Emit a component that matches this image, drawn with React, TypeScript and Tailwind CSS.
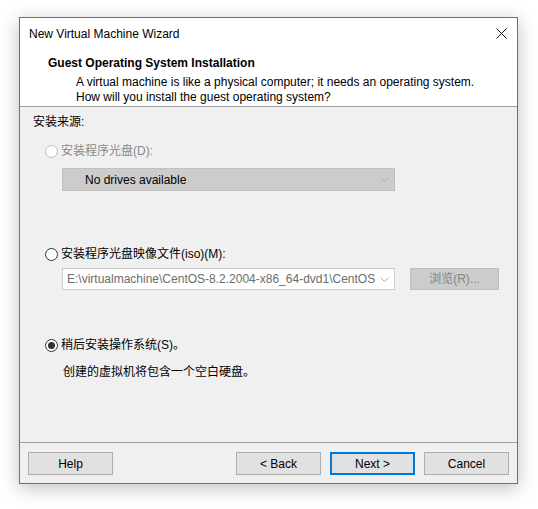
import React from "react";

const font = {
  fontFamily: '"Segoe UI", "Liberation Sans", "Noto Sans CJK SC", sans-serif',
};

const Radio: React.FC<{ checked?: boolean; disabled?: boolean }> = ({
  checked,
  disabled,
}) => (
  <span
    className={
      "flex items-center justify-center w-[13px] h-[13px] rounded-full border bg-white shrink-0 " +
      (disabled ? "border-[#bcbcbc]" : "border-[#333333]")
    }
  >
    {checked && <span className="w-[7px] h-[7px] rounded-full bg-[#333333]" />}
  </span>
);

const Chevron: React.FC = () => (
  <svg width="9" height="5" viewBox="0 0 9 5" className="shrink-0">
    <path d="M0.5 0.5 L4.5 4.5 L8.5 0.5" fill="none" stroke="#a8a8a8" strokeWidth="1" />
  </svg>
);

const Btn: React.FC<{ label: string; primary?: boolean }> = ({ label, primary }) => (
  <button
    className={
      "w-[85px] h-[23px] bg-[#e1e1e1] text-[12px] text-black flex items-center justify-center " +
      (primary ? "border-2 border-[#0078d7]" : "border border-[#adadad]")
    }
  >
    {label}
  </button>
);

export default function App() {
  return (
    <div className="w-[538px] h-[509px] bg-white pl-[19px] pt-[17px]" style={font}>
      <div className="w-[499px] h-[467px] border border-[#707070] bg-[#f0f0f0] flex flex-col shadow-[0_4px_18px_rgba(0,0,0,0.25)]">
        {/* title + header */}
        <div className="bg-white h-[89px] flex flex-col border-b border-[#a0a0a0]">
          <div className="flex items-center justify-between h-[31px] pl-[9px] pr-[10px]">
            <span className="text-[12px] text-black leading-none pt-[1px]">New Virtual Machine Wizard</span>
            <svg width="11" height="11" viewBox="0 0 11 11">
              <path d="M0.5 0.5 L10.5 10.5 M10.5 0.5 L0.5 10.5" stroke="#111" strokeWidth="1" />
            </svg>
          </div>
          <div className="pl-[28px] pt-[7px] text-[12px] font-bold text-black leading-[15px]">
            Guest Operating System Installation
          </div>
          <div className="pl-[56px] pt-[4px] text-[12px] text-black leading-[15px]">
            <div>A virtual machine is like a physical computer; it needs an operating system.</div>
            <div>How will you install the guest operating system?</div>
          </div>
        </div>

        {/* body */}
        <div className="flex-1 flex flex-col pl-[13px] pt-[7px] text-[12px] leading-[16px] text-black">
          <div>安装来源:</div>

          <div className="flex items-center gap-[3px] mt-[13px] pl-[12px] text-[#8a8a8a]">
            <Radio disabled />
            <span>安装程序光盘(D):</span>
          </div>
          <div className="ml-[29px] mt-[9px] w-[333px] h-[23px] bg-[#cccccc] border border-[#bfbfbf] flex items-center justify-between pl-[22px] pr-[5px]">
            <span className="text-black">No drives available</span>
            <Chevron />
          </div>

          <div className="flex items-center gap-[3px] mt-[55px] pl-[12px]">
            <Radio />
            <span>安装程序光盘映像文件(iso)(M):</span>
          </div>
          <div className="flex items-center mt-[6px] ml-[29px]">
            <div className="w-[333px] h-[22px] bg-white border border-[#cccccc] flex items-center pl-[4px] pr-[5px]">
              <div className="w-[308px] overflow-hidden whitespace-nowrap text-[#6d6d6d]">
                E:\virtualmachine\CentOS-8.2.2004-x86_64-dvd1\CentOS
              </div>
              <div className="flex-1" />
              <Chevron />
            </div>
            <div className="ml-[15px] w-[89px] h-[22px] bg-[#cccccc] border border-[#bfbfbf] flex items-center justify-center text-[#838383]">
              浏览(R)...
            </div>
          </div>

          <div className="flex items-center gap-[3px] mt-[47px] pl-[12px]">
            <Radio checked />
            <span>稍后安装操作系统(S)。</span>
          </div>
          <div className="mt-[11px] pl-[30px]">创建的虚拟机将包含一个空白硬盘。</div>
        </div>

        {/* footer */}
        <div className="h-[41px] border-t border-[#a0a0a0] flex items-start pt-[9px] px-[8px]">
          <Btn label="Help" />
          <div className="flex-1" />
          <div className="flex gap-[9px]">
            <Btn label="< Back" />
            <Btn label="Next >" primary />
            <Btn label="Cancel" />
          </div>
        </div>
      </div>
    </div>
  );
}
